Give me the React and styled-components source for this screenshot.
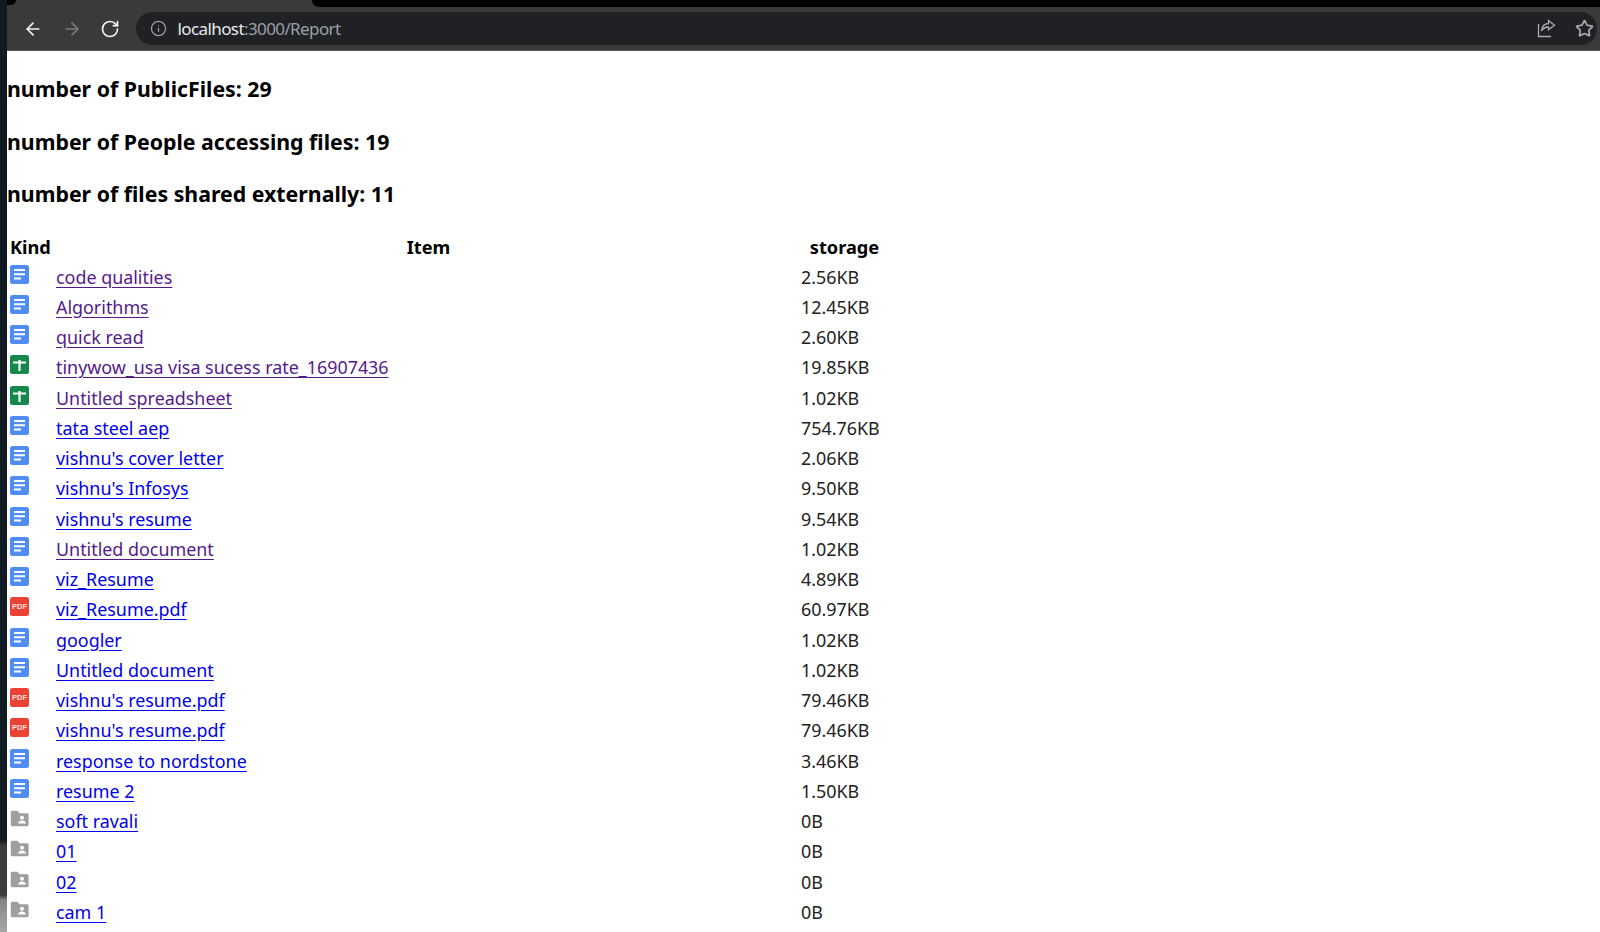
import React from 'react';
import styled, { createGlobalStyle } from 'styled-components';
import { ArrowLeft, ArrowRight, RotateCw, Info, Star } from 'lucide-react';

const GlobalStyle = createGlobalStyle`
  html, body {
    margin: 0;
    height: 932px;
    overflow: hidden;
    background: #fff;
  }
`

// styled-components
const Page = styled.div`
  display: flex;
  height: 932px;
  font-family: "Noto Sans", "Open Sans", sans-serif;
  color: #000;
`

const EdgeStrip = styled.div`
  width: 7px;
  flex-shrink: 0;
  background: linear-gradient(
    to bottom,
    #0f1a21 0,
    #101b22 840px,
    #3c3c3c 846px,
    #3c3c3c 895px,
    #8a8580 900px,
    #a9a6a2 932px
  );
`

const Main = styled.div`
  flex-grow: 1;
  min-width: 0;
`

const Chrome = styled.div`
  height: 51px;
  box-sizing: border-box;
  background: #3a3a3a;
  border-bottom: 1px solid #555;
  position: relative;
`

const TabEdge = styled.div`
  position: absolute;
  top: 0;
  left: 305px;
  right: 0;
  height: 7px;
  background: #000;
  border-bottom-left-radius: 7px;
`

const TabCorner = styled.div`
  position: absolute;
  top: 0;
  left: 0;
  width: 9px;
  height: 5px;
  background: #000;
  border-bottom-right-radius: 5px;
`

const Toolbar = styled.div`
  display: flex;
  align-items: center;
  height: 100%;
  padding: 7px 3px 0 16px;
  box-sizing: border-box;
`

const NavButton = styled.div`
  width: 38.5px;
  display: flex;
  justify-content: flex-start;
  color: ${props => (props.$disabled ? '#7c7c7c' : '#f1f3f4')};
`

const Omnibox = styled.div`
  flex-grow: 1;
  height: 33px;
  margin-left: -3px;
  padding: 0 0 0 14px;
  display: flex;
  align-items: center;
  background: #202124;
  border-radius: 17px;
  color: #9aa0a6;
`

const Url = styled.div`
  margin-left: 11px;
  flex-grow: 1;
  font-size: 17px;
  letter-spacing: -0.6px;
  color: #9aa0a6;

  b {
    font-weight: 400;
    color: #e8eaed;
  }
`

const OmniAction = styled.div`
  width: 38px;
  display: flex;
  color: #a8abae;

  &:last-child {
    width: 22.5px;
  }
`

const Content = styled.div`
  padding-top: 22px;
`

const Stat = styled.h3`
  margin: 0 0 20.5px;
  height: 32px;
  line-height: 32px;
  font-size: 21.3px;
  font-weight: 700;
`

const ReportTable = styled.table`
  border-collapse: separate;
  border-spacing: 0;
  margin-top: 22px;
  table-layout: fixed;
  width: 881px;
  font-size: 17.9px;
`

const HeadCell = styled.th`
  padding: 0;
  height: 29.5px;
  font-weight: 700;
  font-size: 18.2px;
  text-align: ${props => props.$align || 'center'};
  padding-left: ${props => props.$inset || 0}px;
`

const Row = styled.tr`
  height: 30.25px;
`

const IconCell = styled.td`
  padding: 0 0 5px 3px;
  line-height: 0;
`

const NameCell = styled.td`
  padding: 0;
`

const SizeCell = styled.td`
  padding: 0;
  color: #222;
`

const FileLink = styled.a`
  color: ${props => (props.$visited ? '#551a8b' : '#0000ee')};
  text-decoration: underline;
  text-underline-offset: 3px;
`

// drive file type icons
const DocIcon = () => (
  <svg width="19" height="19" viewBox="0 0 19 19">
    <rect width="19" height="19" rx="2.5" fill="#4f8df5" />
    <path d="M4 5h11M4 9.200h11M4 13.400h7" stroke="#fff" strokeWidth="2" fill="none" />
  </svg>
);

const SheetIcon = () => (
  <svg width="19" height="19" viewBox="0 0 19 19">
    <rect width="19" height="19" rx="2.5" fill="#14894b" />
    <path d="M3 7.500h13M9.500 5v11" stroke="#fff" strokeWidth="2.200" fill="none" />
  </svg>
);

const PdfIcon = () => (
  <svg width="19" height="19" viewBox="0 0 19 19">
    <rect width="19" height="19" rx="2.5" fill="#ea4335" />
    <text x="9.500" y="11.500" textAnchor="middle" fontSize="7.500" fontWeight="700" fontFamily="Liberation Sans, sans-serif" fill="#fde4e2">PDF</text>
  </svg>
);

const SharedFolderIcon = () => (
  <svg width="19" height="19" viewBox="0 0 19 19">
    <path d="M.8 3.200C.8 2.400 1.500 1.800 2.300 1.800h5l2.400 2.400h7.300c.8 0 1.600.7 1.600 1.600v10c0 .8-.8 1.500-1.600 1.500H2.300C1.500 17.300.8 16.600.8 15.800z" fill="#9e9e9e" />
    <circle cx="12" cy="8.800" r="2" fill="#fff" />
    <path d="M8 14.500c0-2 2.200-3 4-3s4 1 4 3z" fill="#fff" />
  </svg>
);

const ShareIcon = () => (
  <svg width="19" height="19" viewBox="0 0 19 19" fill="none" stroke="currentColor" strokeWidth="1.300">
    <path d="M1.500 5v12.500h12.500" />
    <path d="M11.500 1.500l6 4.700-6 4.600V8c-3.600 0-5.600 1.300-7 4 .3-4.400 2.800-7.200 7-7.500z" />
  </svg>
);

const icons = { doc: DocIcon, sheet: SheetIcon, pdf: PdfIcon, folder: SharedFolderIcon };

const files = [
  { kind: 'doc', name: 'code qualities', size: '2.56KB', visited: true },
  { kind: 'doc', name: 'Algorithms', size: '12.45KB', visited: true },
  { kind: 'doc', name: 'quick read', size: '2.60KB', visited: true },
  { kind: 'sheet', name: 'tinywow_usa visa sucess rate_16907436', size: '19.85KB', visited: true },
  { kind: 'sheet', name: 'Untitled spreadsheet', size: '1.02KB', visited: true },
  { kind: 'doc', name: 'tata steel aep', size: '754.76KB' },
  { kind: 'doc', name: "vishnu's cover letter", size: '2.06KB' },
  { kind: 'doc', name: "vishnu's Infosys", size: '9.50KB' },
  { kind: 'doc', name: "vishnu's resume", size: '9.54KB' },
  { kind: 'doc', name: 'Untitled document', size: '1.02KB', visited: true },
  { kind: 'doc', name: 'viz_Resume', size: '4.89KB' },
  { kind: 'pdf', name: 'viz_Resume.pdf', size: '60.97KB' },
  { kind: 'doc', name: 'googler', size: '1.02KB' },
  { kind: 'doc', name: 'Untitled document', size: '1.02KB' },
  { kind: 'pdf', name: "vishnu's resume.pdf", size: '79.46KB' },
  { kind: 'pdf', name: "vishnu's resume.pdf", size: '79.46KB' },
  { kind: 'doc', name: 'response to nordstone', size: '3.46KB' },
  { kind: 'doc', name: 'resume 2', size: '1.50KB' },
  { kind: 'folder', name: 'soft ravali', size: '0B' },
  { kind: 'folder', name: '01', size: '0B' },
  { kind: 'folder', name: '02', size: '0B' },
  { kind: 'folder', name: 'cam 1', size: '0B' },
];

// components
const FileRow = ({ file }) => {
  const Icon = icons[file.kind];
  return (
    <Row>
      <IconCell><Icon /></IconCell>
      <NameCell>
        <FileLink href="#" $visited={file.visited}>{file.name}</FileLink>
      </NameCell>
      <SizeCell>{file.size}</SizeCell>
    </Row>
  );
}

const App = () => (
  <Page>
    <GlobalStyle />
    <EdgeStrip />
    <Main>
      <Chrome>
        <TabCorner />
        <TabEdge />
        <Toolbar>
          <NavButton><ArrowLeft size={20} strokeWidth={2} /></NavButton>
          <NavButton $disabled><ArrowRight size={20} strokeWidth={2} /></NavButton>
          <NavButton><RotateCw size={20} strokeWidth={2} /></NavButton>
          <Omnibox>
            <Info size={17} strokeWidth={1.8} />
            <Url><b>localhost</b>:3000/Report</Url>
            <OmniAction><ShareIcon /></OmniAction>
            <OmniAction><Star size={19} strokeWidth={2.2} /></OmniAction>
          </Omnibox>
        </Toolbar>
      </Chrome>
      <Content>
        <Stat>number of PublicFiles: 29</Stat>
        <Stat>number of People accessing files: 19</Stat>
        <Stat>number of files shared externally: 11</Stat>
        <ReportTable>
          <colgroup>
            <col style={{ width: 49 }} />
            <col style={{ width: 745 }} />
            <col style={{ width: 87 }} />
          </colgroup>
          <thead>
            <tr>
              <HeadCell $align="left" $inset={3}>Kind</HeadCell>
              <HeadCell>Item</HeadCell>
              <HeadCell>storage</HeadCell>
            </tr>
          </thead>
          <tbody>
            {files.map((file, i) => <FileRow key={i} file={file} />)}
          </tbody>
        </ReportTable>
      </Content>
    </Main>
  </Page>
);

export default App;
